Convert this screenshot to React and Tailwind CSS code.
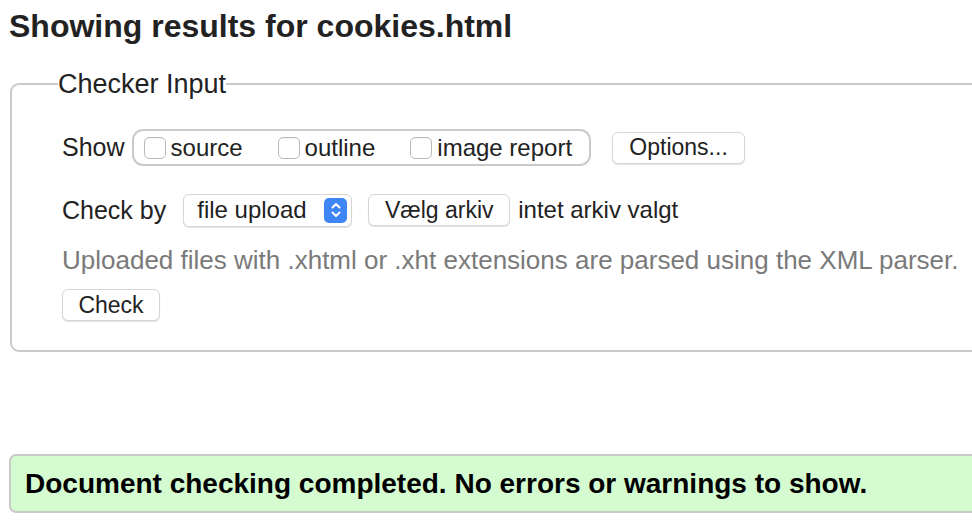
import React from "react";

function Checkbox({ label }) {
  return (
    <label className="flex items-center gap-[5px]">
      <span className="w-[22px] h-[22px] rounded-[5px] border border-[#b9b9b9] bg-white shadow-[inset_0_1px_1px_rgba(0,0,0,0.05)]" />
      <span>{label}</span>
    </label>
  );
}

function Button({ children, className = "" }) {
  return (
    <button
      className={`h-[32px] bg-white rounded-[6px] border border-[#d6d6d6] shadow-[0_1px_1px_rgba(0,0,0,0.12)] text-[23px] leading-none text-[#222] ${className}`}
    >
      {children}
    </button>
  );
}

export default function App() {
  return (
    <div className="w-[972px] h-[526px] overflow-hidden bg-white text-[#222] font-['Liberation_Sans',Arial,sans-serif]">
      {/* TITLE */}
      <h2 className="pl-[9px] pt-[8px] text-[32px] font-bold leading-[36px] text-[#222]">
        Showing results for cookies.html
      </h2>

      {/* CHECKER INPUT */}
      <fieldset className="ml-[10px] mt-[25px] w-[1000px] border-2 border-[#cacaca] rounded-[9px] pl-[50px] pr-4 pt-[30px] pb-[30px] h-[283px]">
        <legend className="-ml-[4px] px-0 text-[27px] leading-[30px] text-[#222]">
          Checker Input
        </legend>

        <div className="flex items-center text-[25px]">
          <span>Show</span>
          <div className="ml-[7px] flex items-center h-[37px] pl-[10px] pr-[17px] border-2 border-[#cacaca] rounded-[11px] text-[24px] gap-[35px]">
            <Checkbox label="source" />
            <Checkbox label="outline" />
            <Checkbox label="image report" />
          </div>
          <Button className="ml-[21px] w-[133px]">Options...</Button>
        </div>

        <div className="flex items-center mt-[25px] text-[25px]">
          <span>Check by</span>
          <div className="ml-[17px] flex items-center justify-between h-[33px] w-[169px] pl-[13px] pr-[4px] bg-white rounded-[6px] border border-[#d6d6d6] shadow-[0_1px_1px_rgba(0,0,0,0.12)] text-[24px]">
            <span>file upload</span>
            <span className="w-[23px] h-[25px] rounded-[5px] bg-[#3f86f5] flex items-center justify-center">
              <svg width="12" height="18" viewBox="0 0 12 18" fill="none" stroke="white" strokeWidth="2" strokeLinecap="round" strokeLinejoin="round">
                <path d="M2.5 6.5 6 3 9.5 6.5" />
                <path d="M2.5 11.5 6 15 9.5 11.5" />
              </svg>
            </span>
          </div>
          <Button className="ml-[16px] w-[142px]">Vælg arkiv</Button>
          <span className="ml-[8px] text-[24px]">intet arkiv valgt</span>
        </div>

        <p className="mt-[16px] text-[26px] leading-[30px] text-[#7a7a7a] whitespace-nowrap">
          Uploaded files with .xhtml or .xht extensions are parsed using the XML parser.
        </p>

        <Button className="mt-[14px] w-[98px] h-[31px]">Check</Button>
      </fieldset>

      {/* RESULT */}
      <div className="ml-[9px] mt-[102px] w-[1000px] h-[59px] flex items-center pl-[14px] bg-[#d5fbd1] border-2 border-[#c9c9c9] rounded-[7px]">
        <p className="text-[28px] font-bold text-black leading-none">
          Document checking completed. No errors or warnings to show.
        </p>
      </div>
    </div>
  );
}
